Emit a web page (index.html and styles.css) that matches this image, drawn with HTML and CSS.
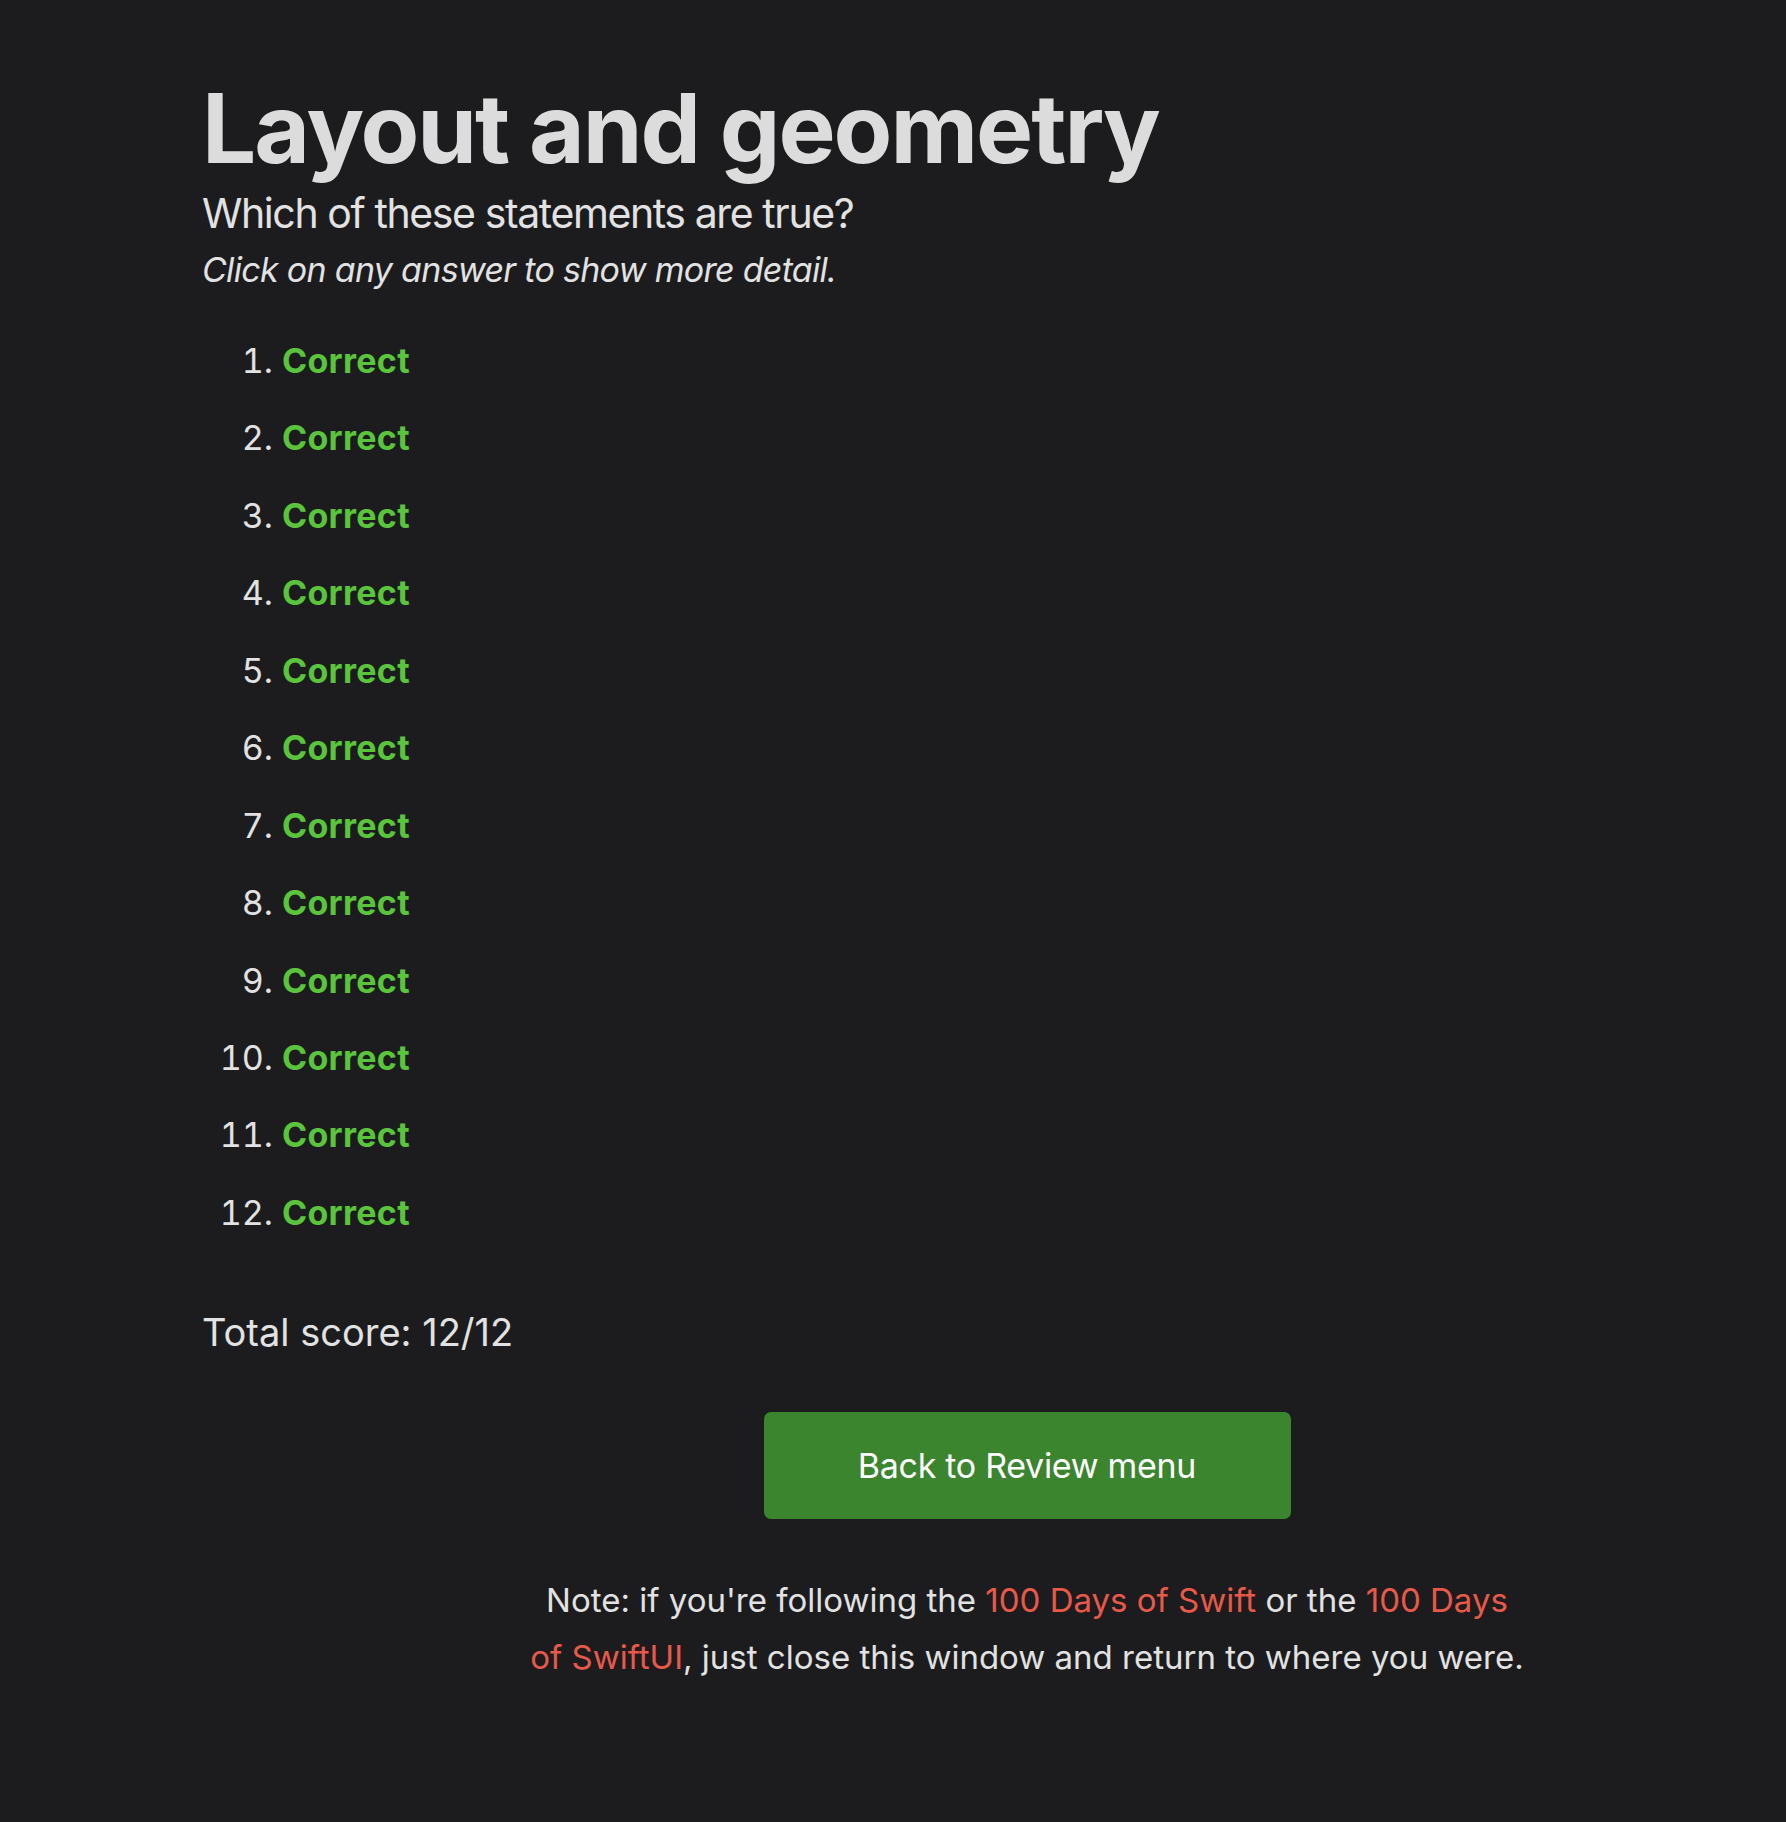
FILE: index.html
```html
<!DOCTYPE html>
<html lang="en">
<head>
<meta charset="utf-8">
<title>Layout and geometry</title>
<link rel="stylesheet" href="styles.css">
</head>
<body>
<main class="page">
  <h1 class="title">Layout and geometry</h1>
  <p class="subtitle">Which of these statements are true?</p>
  <p class="hint">Click on any answer to show more detail.</p>
  <ol class="answers">
    <li><span class="correct">Correct</span></li>
    <li><span class="correct">Correct</span></li>
    <li><span class="correct">Correct</span></li>
    <li><span class="correct">Correct</span></li>
    <li><span class="correct">Correct</span></li>
    <li><span class="correct">Correct</span></li>
    <li><span class="correct">Correct</span></li>
    <li><span class="correct">Correct</span></li>
    <li><span class="correct">Correct</span></li>
    <li><span class="correct">Correct</span></li>
    <li><span class="correct">Correct</span></li>
    <li><span class="correct">Correct</span></li>
  </ol>
  <p class="total">Total score: 12/12</p>
  <div class="footer">
    <a class="button" href="#">Back to Review menu</a>
    <p class="note">Note: if you're following the <a class="link" href="#">100 Days of Swift</a> or the <a class="link" href="#">100 Days of SwiftUI</a>, just close this window and return to where you were.</p>
  </div>
</main>
</body>
</html>
```

FILE: styles.css
```css
html, body {
  margin: 0;
  padding: 0;
  background: #1c1c1e;
}
body {
  font-family: Inter, "Noto Sans", "Liberation Sans", sans-serif;
  color: #e2e2e2;
  font-size: 34px;
  min-height: 1822px;
}
.page {
  padding: 75px 0 0 202px;
}
.title {
  margin: 0;
  font-size: 96px;
  line-height: 106px;
  font-weight: 700;
  color: #dcdcdc;
  letter-spacing: -2px;
}
.subtitle {
  margin: 7px 0 0;
  font-size: 41px;
  line-height: 50px;
  letter-spacing: -1.4px;
}
.hint {
  margin: 10px 0 0;
  font-style: italic;
  font-size: 34px;
  line-height: 44px;
  letter-spacing: -0.7px;
}
.answers {
  margin: 47px 0 0;
  padding-left: 80px;
  display: flex;
  flex-direction: column;
  gap: 33.45px;
}
.answers li {
  line-height: 44px;
  display: list-item;
}
.correct {
  color: #5ac43c;
  font-weight: 700;
  letter-spacing: 0.3px;
}
.total {
  margin: 73px 0 0;
  font-size: 38px;
  line-height: 48px;
}
.footer {
  margin: 56px 0 0 323px;
  width: 1004px;
  display: flex;
  flex-direction: column;
  align-items: center;
}
.button {
  display: flex;
  align-items: center;
  justify-content: center;
  width: 527px;
  height: 107px;
  background: #3b852f;
  border-radius: 7px;
  color: #ffffff;
  text-decoration: none;
  font-size: 34px;
  line-height: 44px;
  letter-spacing: -0.3px;
  padding-top: 2px;
  box-sizing: border-box;
}
.note {
  margin: 53px 0 0;
  width: 996px;
  font-size: 33px;
  line-height: 57px;
  text-align: center;
}
.link {
  color: #e8594a;
  text-decoration: none;
}
```
